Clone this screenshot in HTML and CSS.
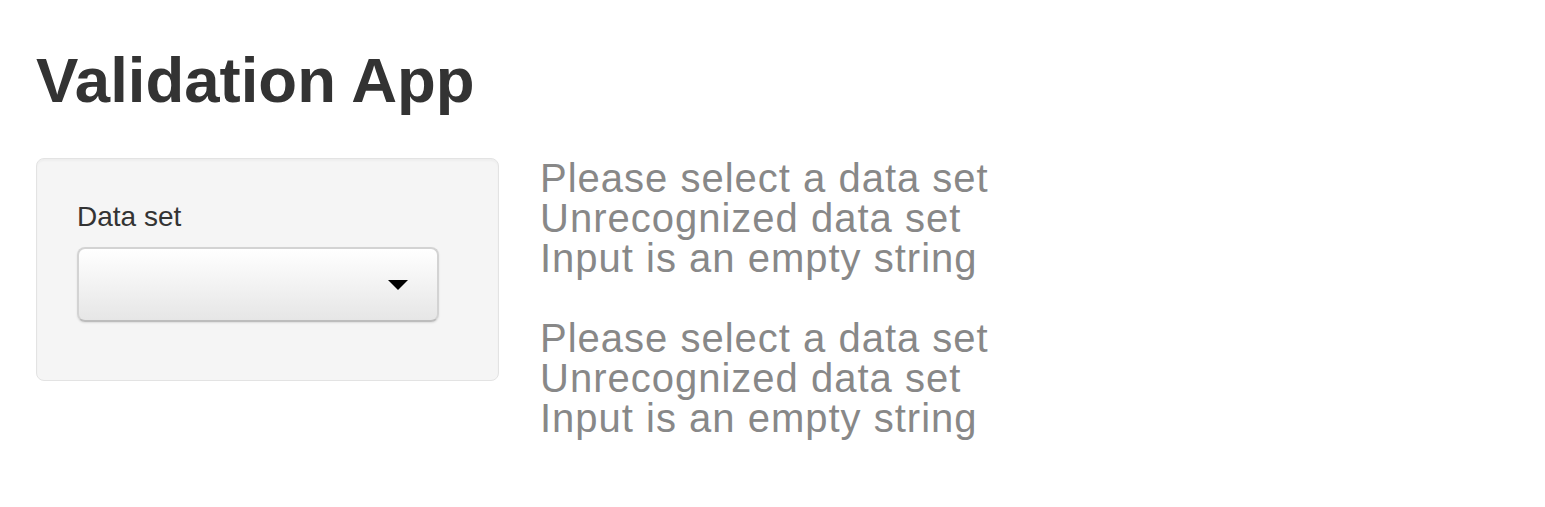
FILE: index.html
```html
<!DOCTYPE html>
<html lang="en">
<head>
    <meta charset="UTF-8">
    <title>Validation App</title>
    <link rel="stylesheet" href="styles.css">
</head>
<body>
    <div class="container">
        <h2 class="title">Validation App</h2>
        <div class="row">
            <div class="well">
                <label class="control-label" for="dataset">Data set</label>
                <div class="select" id="dataset">
                    <svg class="caret" width="20" height="10" viewBox="0 0 20 10"><path d="M0 0 L20 0 L10 10 Z" fill="#000"/></svg>
                </div>
            </div>
            <div class="main">
                <div class="output">
                    <div>Please select a data set</div>
                    <div>Unrecognized data set</div>
                    <div>Input is an empty string</div>
                </div>
                <div class="output">
                    <div>Please select a data set</div>
                    <div>Unrecognized data set</div>
                    <div>Input is an empty string</div>
                </div>
            </div>
        </div>
    </div>
</body>
</html>
```

FILE: styles.css
```css
body {
    margin: 0;
    font-family: "Liberation Sans", Arial, sans-serif;
    color: #333;
    background-color: #fff;
}

.container {
    padding: 40px 36px 0 36px;
}

.title {
    margin: 0 0 38px 0;
    font-size: 63.5px;
    line-height: 80px;
    font-weight: bold;
}

.row {
    display: flex;
    align-items: flex-start;
    gap: 41px;
}

.well {
    width: 381px;
    padding: 38px 40px;
    background-color: #f5f5f5;
    border: 1px solid #e3e3e3;
    border-radius: 8px;
    box-shadow: inset 0 2px 2px rgba(0, 0, 0, 0.03);
}

.control-label {
    display: block;
    font-size: 28px;
    line-height: 40px;
    margin-bottom: 10px;
}

.select {
    display: flex;
    align-items: center;
    justify-content: flex-end;
    box-sizing: border-box;
    width: 362px;
    height: 75px;
    margin-bottom: 20px;
    padding-right: 29px;
    background: linear-gradient(#ffffff, #e6e6e6);
    border: 2px solid #d3d3d3;
    border-bottom-color: #bdbdbd;
    border-radius: 8px;
    box-shadow: 0 1px 2px rgba(0, 0, 0, 0.1);
}

.caret {
    display: block;
}

.output {
    color: #888;
    font-size: 40px;
    line-height: 40px;
    letter-spacing: 1px;
    margin-bottom: 40px;
}
```
